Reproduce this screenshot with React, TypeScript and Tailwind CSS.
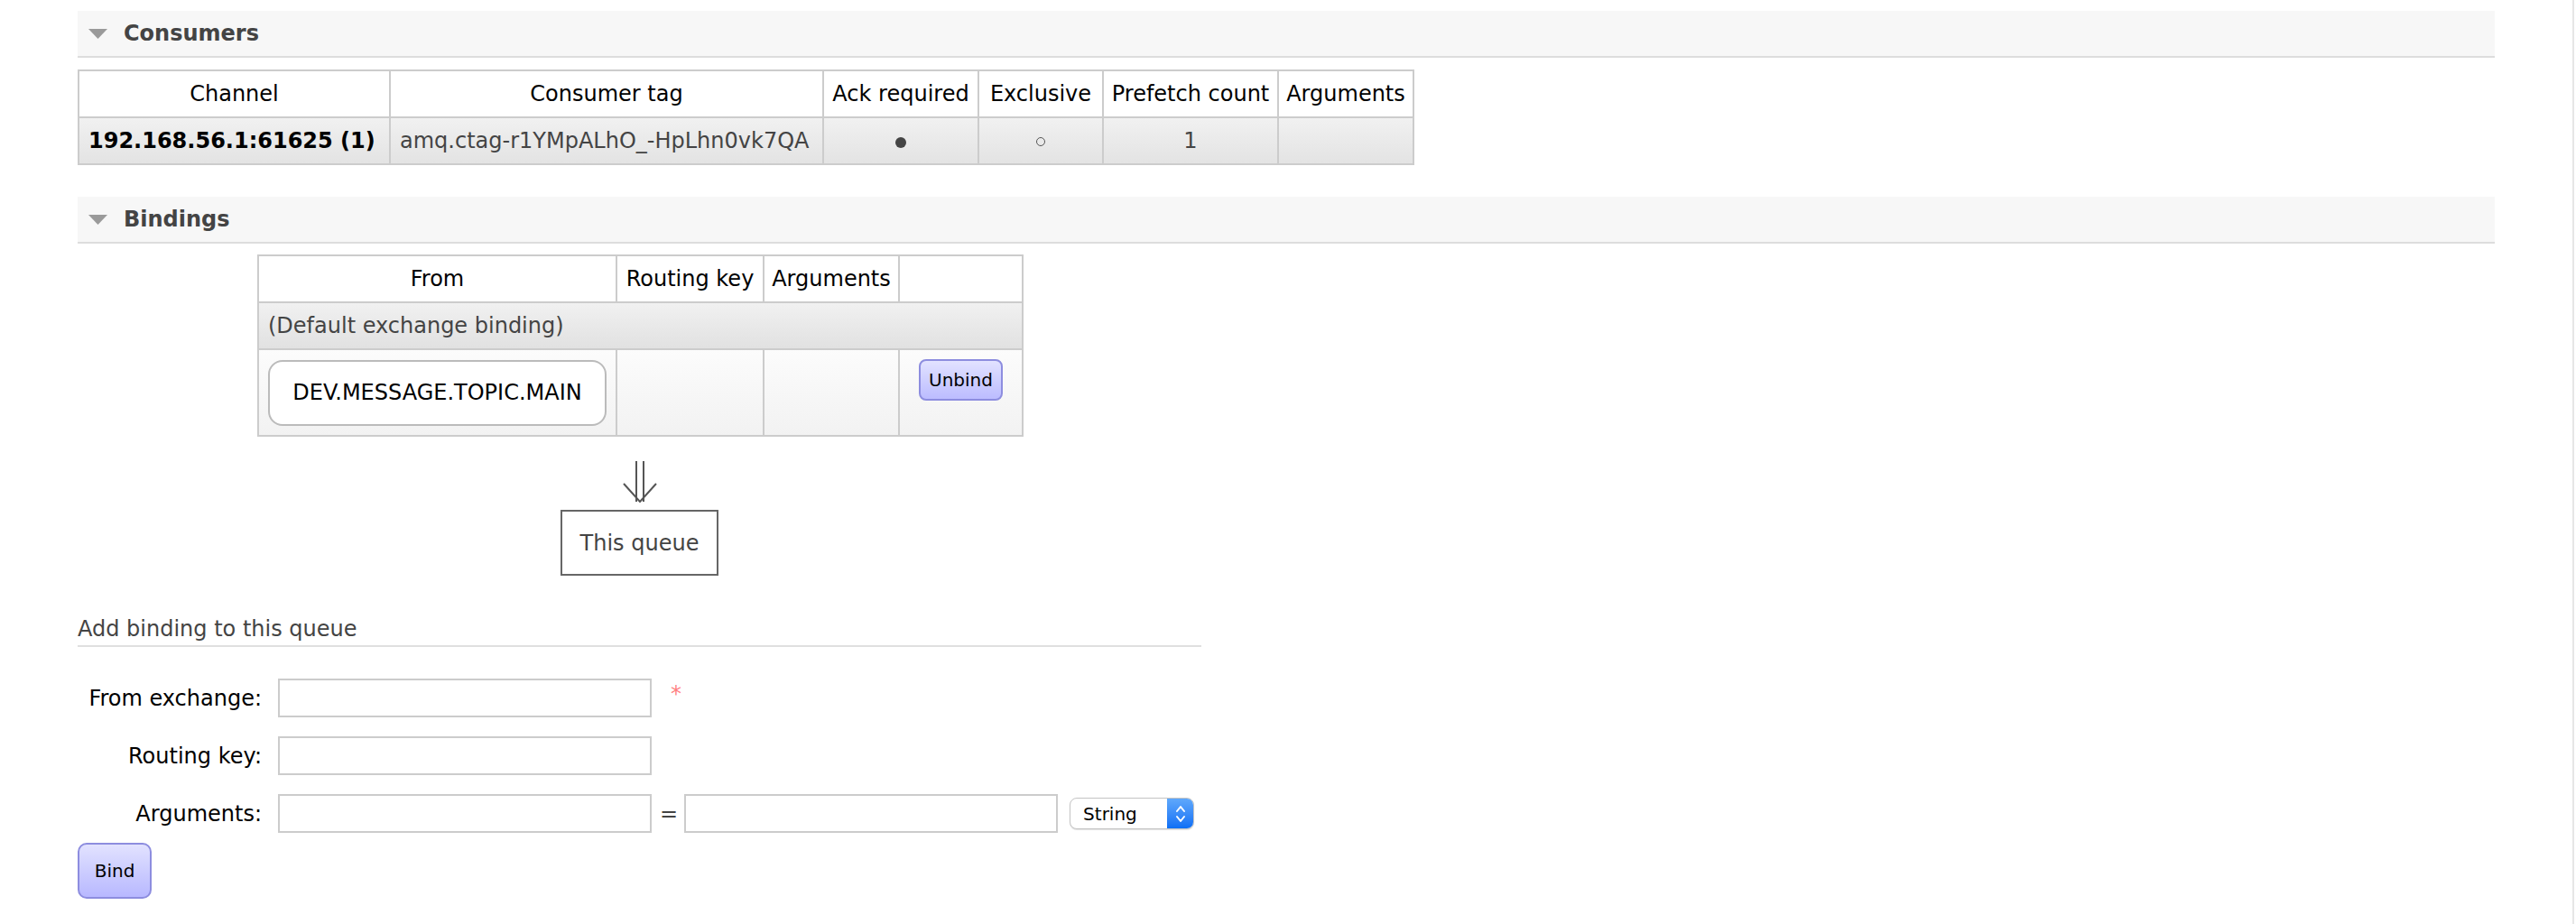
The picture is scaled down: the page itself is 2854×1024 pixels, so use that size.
import React from "react";

const font = { fontFamily: '"DejaVu Sans", Verdana, sans-serif' };

function SectionBar({ title }: { title: string }) {
  return (
    <div className="flex h-[52px] items-center border-b-2 border-[#dddddd] bg-[#f7f7f7] pl-[12px]">
      <svg width="21" height="11" viewBox="0 0 21 11" className="mr-[18px]">
        <polygon points="0,0 21,0 10.5,11" fill="#9a9a9a" />
      </svg>
      <span className="text-[24px] font-bold text-[#444444]">{title}</span>
    </div>
  );
}

const th = "whitespace-nowrap border-2 border-[#cccccc] px-[6px] text-center font-normal text-black";
const td = "border-2 border-[#cccccc] px-[10px]";

function Consumers() {
  return (
    <table className="mt-[13px] table-fixed border-collapse text-[24px]">
      <colgroup>
        <col className="w-[345px]" />
        <col className="w-[480px]" />
        <col className="w-[172px]" />
        <col className="w-[138px]" />
        <col className="w-[194px]" />
        <col className="w-[150px]" />
      </colgroup>
      <thead>
        <tr className="h-[52px] bg-white">
          <th className={th}>Channel</th>
          <th className={th}>Consumer tag</th>
          <th className={th}>Ack required</th>
          <th className={th}>Exclusive</th>
          <th className={th}>Prefetch count</th>
          <th className={th}>Arguments</th>
        </tr>
      </thead>
      <tbody>
        <tr className="h-[52px] bg-linear-to-b from-[#f1f1f1] to-[#e3e3e3]">
          <td className={`${td} whitespace-nowrap font-bold text-black`}>192.168.56.1:61625 (1)</td>
          <td className={`${td} whitespace-nowrap text-[#444444]`}>amq.ctag-r1YMpALhO_-HpLhn0vk7QA</td>
          <td className={td}>
            <div className="flex justify-center pt-[3px]">
              <span className="block h-[12px] w-[12px] rounded-full bg-[#444444]" />
            </div>
          </td>
          <td className={td}>
            <div className="flex justify-center pt-[2px]">
              <span className="block h-[10px] w-[10px] rounded-full border border-[#555555]" />
            </div>
          </td>
          <td className={`${td} text-center text-[#444444]`}>1</td>
          <td className={td}></td>
        </tr>
      </tbody>
    </table>
  );
}

function Bindings() {
  return (
    <div className="ml-[199px] w-[847px]">
      <table className="mt-[12px] w-[847px] table-fixed border-collapse text-[24px]">
        <colgroup>
          <col className="w-[397px]" />
          <col className="w-[163px]" />
          <col className="w-[150px]" />
          <col className="w-[137px]" />
        </colgroup>
        <thead>
          <tr className="h-[52px] bg-white">
            <th className={th}>From</th>
            <th className={`${th} px-[2px]`}>Routing key</th>
            <th className={`${th} px-[2px]`}>Arguments</th>
            <th className={th}></th>
          </tr>
        </thead>
        <tbody>
          <tr className="h-[52px] bg-linear-to-b from-[#f1f1f1] to-[#e1e1e1]">
            <td colSpan={4} className={`${td} px-[8px] text-[#444444]`}>
              (Default exchange binding)
            </td>
          </tr>
          <tr className="h-[96px] bg-linear-to-b from-[#fcfcfc] to-[#f2f2f2]">
            <td className={`${td} px-[8px]`}>
              <div className="flex h-[73px] items-center justify-center rounded-[16px] border-2 border-[#bbbbbb] bg-white text-black">
                DEV.MESSAGE.TOPIC.MAIN
              </div>
            </td>
            <td className={td}></td>
            <td className={td}></td>
            <td className={`${td} pt-[10px] align-top`}>
              <div className="flex justify-center">
                <button className="h-[46px] w-[93px] rounded-[8px] border-2 border-[#8d8ddf] bg-linear-to-b from-[#e2e2ff] to-[#bcbcff] text-[20px] text-black">
                  Unbind
                </button>
              </div>
            </td>
          </tr>
        </tbody>
      </table>
      <div className="flex flex-col items-center">
        <svg width="40" height="46" viewBox="0 0 40 46" className="mt-[27px]">
          <g stroke="#555555" strokeWidth="2" fill="none">
            <line x1="16" y1="0" x2="16" y2="45" />
            <line x1="24" y1="0" x2="24" y2="45" />
            <polyline points="2,25 20,45 38,25" />
          </g>
        </svg>
        <div className="mt-[8px] flex h-[73px] w-[175px] items-center justify-center border-2 border-[#666666] text-[24px] text-[#444444]">
          This queue
        </div>
      </div>
    </div>
  );
}

function Field({ label, children }: { label: string; children: React.ReactNode }) {
  return (
    <div className="flex items-center">
      <label className="w-[204px] text-right text-[24px] text-black">{label}</label>
      <div className="ml-[18px] flex items-center">{children}</div>
    </div>
  );
}

const inputCls = "h-[43px] w-[414px] border-2 border-[#cccccc] bg-white";

function AddBinding() {
  return (
    <div className="mt-[45px]">
      <div className="w-[1245px] border-b-2 border-[#e0e0e0] pb-[3px] text-[24px] leading-[29px] text-[#444444]">
        Add binding to this queue
      </div>
      <div className="mt-[35px] flex flex-col gap-[21px]">
        <Field label="From exchange:">
          <input className={inputCls} />
          <span className="ml-[21px] -mt-[10px] text-[24px] text-[#ff8080]">*</span>
        </Field>
        <Field label="Routing key:">
          <input className={inputCls} />
        </Field>
        <Field label="Arguments:">
          <input className={inputCls} />
          <span className="ml-[9px] mr-[7px] text-[24px] text-[#444444]">=</span>
          <input className={inputCls} />
          <div className="ml-[13px] flex h-[35px] w-[138px] items-stretch overflow-hidden rounded-[8px] border border-[#c4c4c4] bg-white shadow-[0_1px_1px_rgba(0,0,0,0.12)]">
            <span className="flex flex-1 items-center pl-[14px] text-[20px] text-black">String</span>
            <span className="flex w-[29px] items-center justify-center bg-linear-to-b from-[#5fa8fb] to-[#0b6ff5]">
              <svg width="12" height="22" viewBox="0 0 12 22">
                <g stroke="white" strokeWidth="2" fill="none" strokeLinecap="round" strokeLinejoin="round">
                  <polyline points="2,8 6,3 10,8" />
                  <polyline points="2,14 6,19 10,14" />
                </g>
              </svg>
            </span>
          </div>
        </Field>
      </div>
      <button className="mt-[11px] h-[62px] w-[82px] rounded-[10px] border-2 border-[#8d8ddf] bg-linear-to-b from-[#e2e2ff] to-[#b8b8ff] text-[20px] text-black">
        Bind
      </button>
    </div>
  );
}

export default function App() {
  return (
    <div className="flex min-h-[1024px] bg-white" style={font}>
      <div className="flex-1 pl-[86px] pr-[86px] pt-[12px]">
        <SectionBar title="Consumers" />
        <Consumers />
        <div className="mt-[35px]">
          <SectionBar title="Bindings" />
        </div>
        <Bindings />
        <AddBinding />
      </div>
      <div className="w-[2px] bg-[#e6e6e6]" />
      <div className="w-[2px]" />
    </div>
  );
}
